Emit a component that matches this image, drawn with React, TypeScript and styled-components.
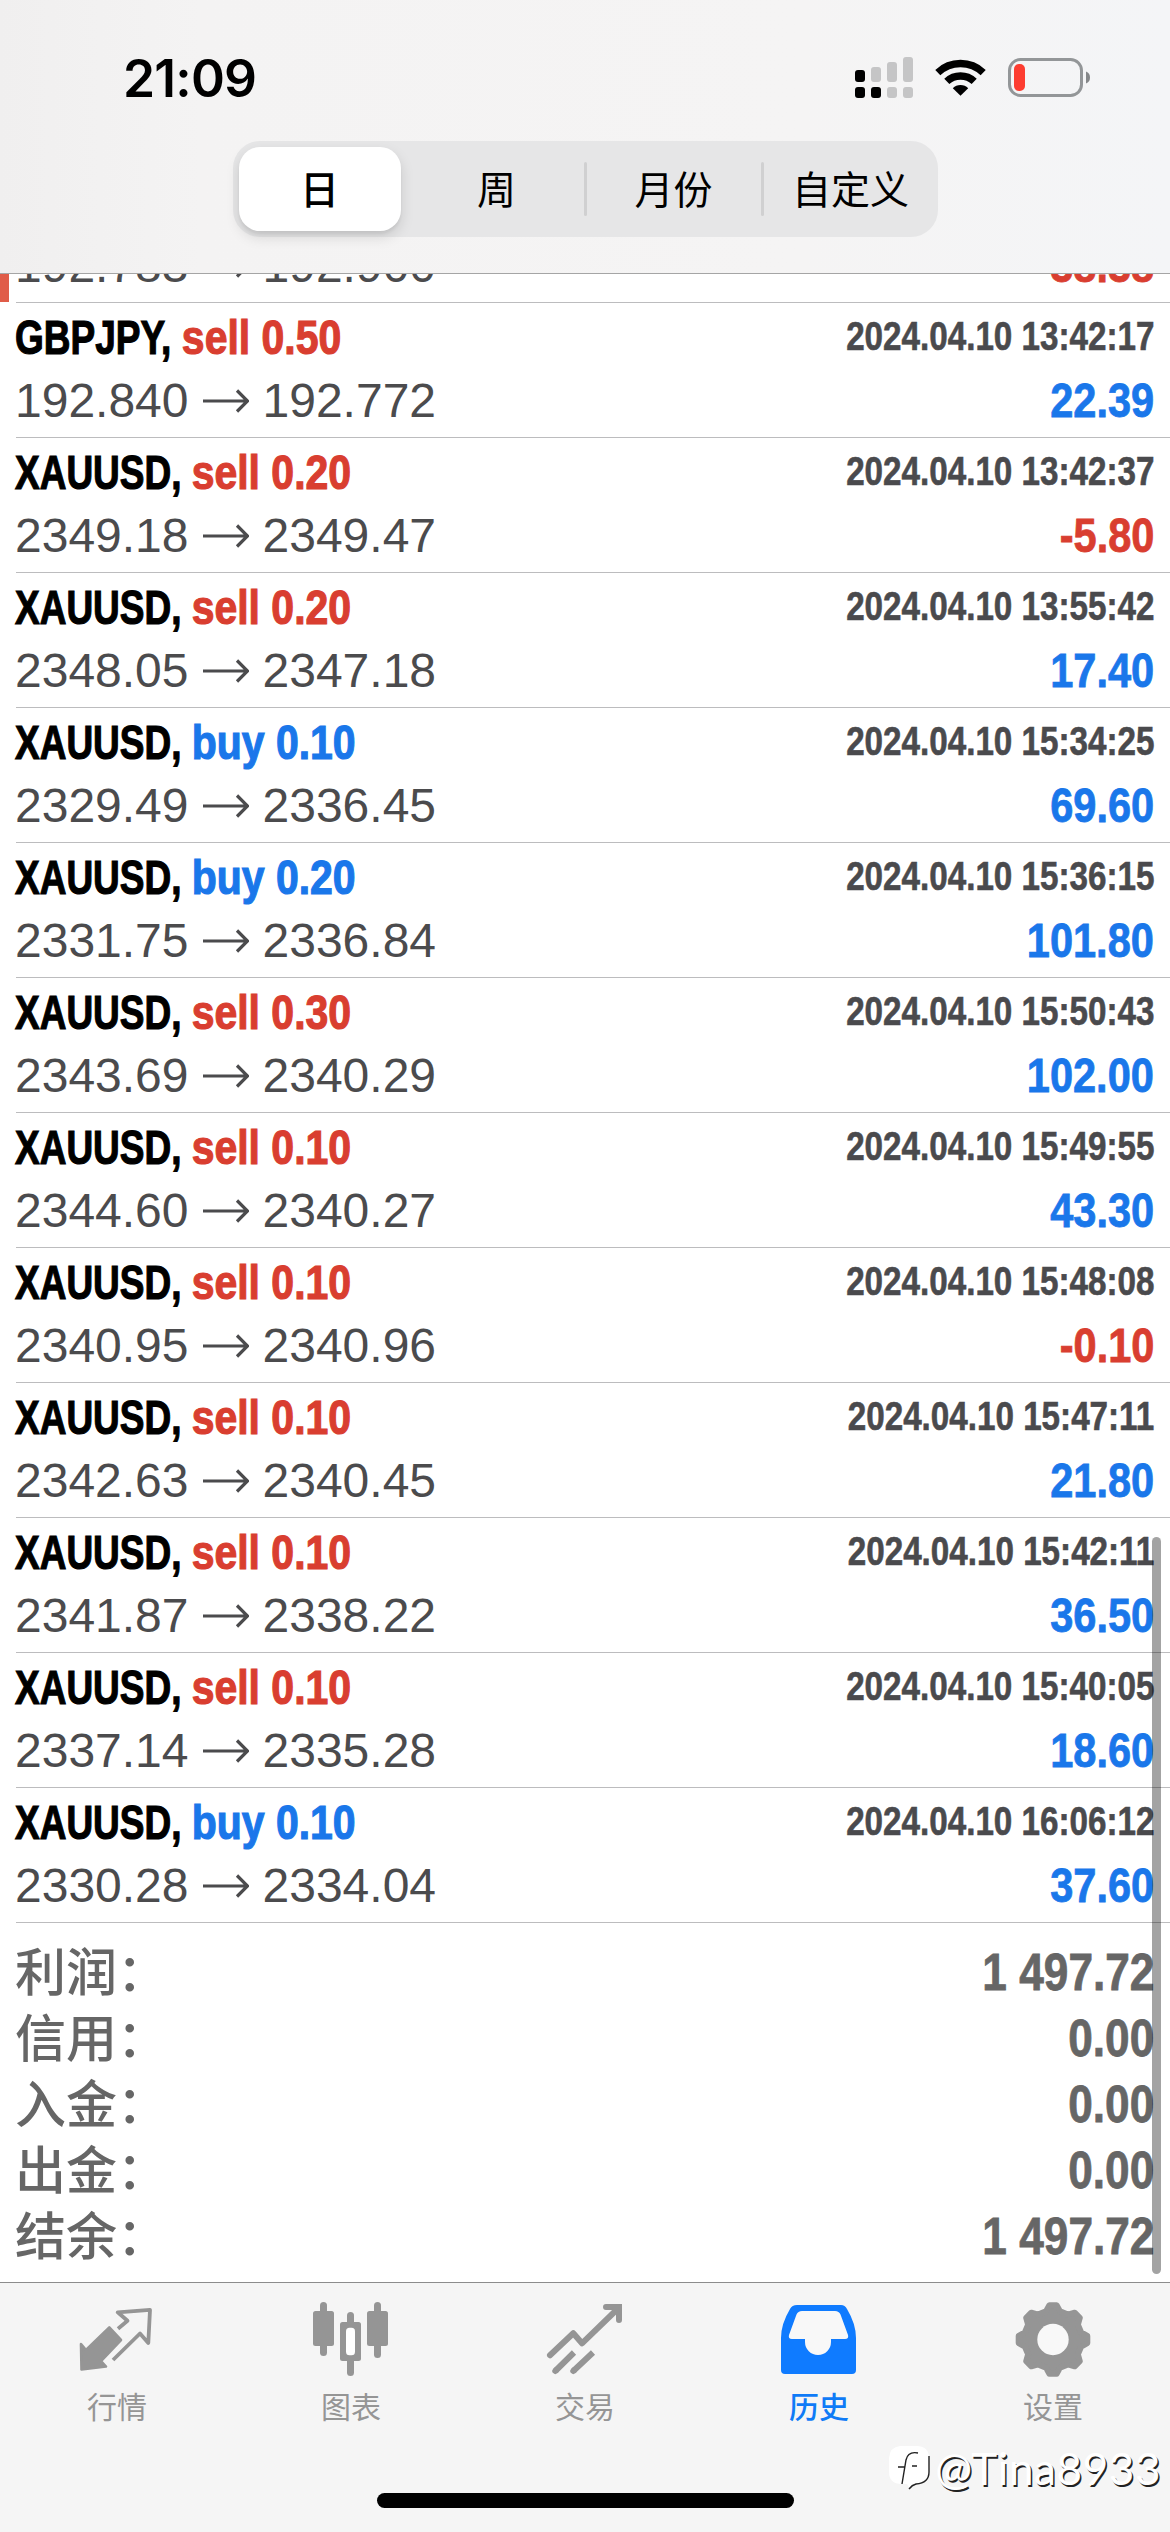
import React from "react";
import styled, { createGlobalStyle, css } from "styled-components";

const RED = "#d93e30";
const BLUE = "#1a77ea";

const GlobalStyle = createGlobalStyle`
  * { box-sizing: border-box; }
  body { margin: 0; background: #fff; }
`;

const latin = css`font-family: "Liberation Sans", Arial, sans-serif;`;
const cjk = css`font-family: "Noto Sans CJK SC", "Liberation Sans", sans-serif;`;

const Screen = styled.div`
  width: 1170px;
  height: 2532px;
  display: flex;
  flex-direction: column;
  overflow: hidden;
  background: #fff;
  ${latin}
`;

const Header = styled.header`
  height: 274px;
  flex: none;
  display: flex;
  flex-direction: column;
  align-items: center;
  border-bottom: 1px solid #a5a5a5;
  background: linear-gradient(90deg, #f0efef 0, #f4f3f3 200px, #f5f4f4 800px, #f4f5f7 1170px);
`;

const StatusBar = styled.div`
  width: 100%;
  height: 141px;
  padding: 14px 79px 0 123px;
  display: flex;
  align-items: center;
  justify-content: space-between;
`;

const Clock = styled.div`
  font: 600 51.5px/60px Inter, sans-serif;
  letter-spacing: -0.8px;
  color: #000;
`;

const StatusIcons = styled.svg`
  display: block;
  width: 236px;
  height: 44px;
`;

const Segmented = styled.div`
  width: 705px;
  height: 96px;
  padding: 6px 0 6px 6px;
  display: grid;
  grid-template-columns: 162px 9px 1fr 3px 1fr 3px 1fr;
  align-items: center;
  border-radius: 27px;
  background: #e6e6e7;
`;

const Segment = styled.div<{ $active?: boolean }>`
  height: 84px;
  display: flex;
  align-items: center;
  justify-content: center;
  border-radius: 21px;
  color: #000;
  font-size: 39px;
  line-height: 60px;
  padding-bottom: 5px;
  font-weight: ${(p) => (p.$active ? 500 : 400)};
  ${cjk}
  ${(p) => p.$active && css`
    background: #fff;
    box-shadow: 0 6px 14px rgba(0, 0, 0, 0.13), 0 3px 3px rgba(0, 0, 0, 0.05);
  `}
`;

const SegmentRule = styled.i<{ $hidden?: boolean }>`
  height: 54px;
  border-radius: 2px;
  background: ${(p) => (p.$hidden ? "transparent" : "#d0d0d1")};
`;

const ScrollArea = styled.main`
  position: relative;
  flex: 1;
  min-height: 0;
  overflow: hidden;
`;

const DealList = styled.div`
  margin-top: -106px;
`;

const Deal = styled.div<{ $flag?: boolean }>`
  height: 135px;
  display: flex;
  &::before {
    content: "";
    width: 9px;
    height: 134px;
    margin-right: 7px;
    background: ${(p) => (p.$flag ? "#e05c48" : "transparent")};
  }
`;

const DealBody = styled.div`
  flex: 1;
  padding: 1px 16px 0 0;
  border-bottom: 1px solid #bcbcbe;
`;

const Line = styled.div<{ $h: number }>`
  height: ${(p) => p.$h}px;
  line-height: ${(p) => p.$h}px;
  display: flex;
  justify-content: space-between;
  white-space: nowrap;
`;

const Title = styled.div`
  margin-left: -1px;
  font-size: 49px;
  font-weight: 700;
  color: #000;
  -webkit-text-stroke: 1.2px currentColor;
  transform: scaleX(0.755);
  transform-origin: left;
`;

const Side = styled.span<{ $color: string }>`
  display: inline-block;
  color: ${(p) => p.$color};
  transform: scaleX(1.107);
  transform-origin: left;
`;

const Stamp = styled.div`
  font-size: 40px;
  font-weight: 700;
  line-height: 65px;
  color: #4a4a4d;
  -webkit-text-stroke: 0.6px currentColor;
  transform: scaleX(0.83);
  transform-origin: right;
`;

const Prices = styled.div`
  margin-left: -1px;
  display: flex;
  align-items: center;
  font-size: 48px;
  color: #4b4b4d;
  svg { width: 46px; height: 24px; margin: 0 14px 0 14px; }
`;

const Amount = styled.div<{ $color: string }>`
  font-size: 48px;
  font-weight: 700;
  color: ${(p) => p.$color};
  -webkit-text-stroke: 0.8px currentColor;
  transform: scaleX(0.865);
  transform-origin: right;
`;

const Summary = styled.div`
  padding: 16px 16px 0 15px;
`;

const SummaryRow = styled.div`
  height: 66px;
  display: flex;
  justify-content: space-between;
  align-items: center;
  color: #666;
`;

const SummaryLabel = styled.div`
  margin-top: -6px;
  font-size: 51px;
  line-height: 66px;
  font-weight: 500;
  ${cjk}
`;

const SummaryValue = styled.div`
  font-size: 52px;
  line-height: 66px;
  font-weight: 700;
  -webkit-text-stroke: 0.8px currentColor;
  transform: scaleX(0.85);
  transform-origin: right;
`;

const ScrollThumb = styled.div`
  position: absolute;
  right: 9px;
  top: 1263px;
  bottom: 8px;
  width: 9px;
  border-radius: 5px;
  background: rgba(0, 0, 0, 0.36);
`;

const TabBar = styled.nav`
  position: relative;
  height: 250px;
  flex: none;
  border-top: 1px solid #8c8c8c;
  background: #f5f5f5;
  display: flex;
  flex-direction: column;
  align-items: center;
  justify-content: space-between;
  padding-bottom: 24px;
`;

const Tabs = styled.div`
  width: 100%;
  display: grid;
  grid-template-columns: repeat(5, 1fr);
`;

const Tab = styled.div<{ $active?: boolean }>`
  padding-top: 13px;
  display: flex;
  flex-direction: column;
  align-items: center;
  color: ${(p) => (p.$active ? "#0f7bf7" : "#959595")};
  font-size: 30px;
  line-height: 40px;
  font-weight: ${(p) => (p.$active ? 500 : 400)};
  ${cjk}
  svg { width: 84px; height: 84px; margin-bottom: 5px; }
`;

const HomeIndicator = styled.div`
  width: 417px;
  height: 15px;
  border-radius: 8px;
  background: #000;
`;

const Watermark = styled.div`
  position: absolute;
  right: 9px;
  bottom: 36px;
  display: flex;
  align-items: center;
  gap: 3px;
  font: 400 44px/56px Lato, sans-serif;
  letter-spacing: 0.6px;
  color: #fff;
  text-shadow: 1.5px 1.5px 0.5px #222;
  svg { width: 44px; height: 48px; }
`;

const gearPath = Array.from({ length: 8 })
  .flatMap((_, i) =>
    [[-14, 29], [-6, 34.5], [6, 34.5], [14, 29]].map(([da, r]) => {
      const a = ((i * 45 - 90 + da) * Math.PI) / 180;
      return `${(42 + r * Math.cos(a)).toFixed(2)} ${(43.5 + r * Math.sin(a)).toFixed(2)}`;
    })
  )
  .join(" L");

const QuotesIcon = () => (
  <svg viewBox="0 0 84 84" fill="none" stroke="currentColor">
    <path d="M6 48L11 54L34.3 31.5L46 44L26 65L31 70.5L6.5 73.5Z" fill="currentColor" strokeWidth="2.6" strokeLinejoin="round" />
    <path d="M43 32.7L52.5 24.8L42.7 16.3L75 13.8L73.3 47L65 37.5L38 64" strokeWidth="3.8" strokeLinejoin="round" />
  </svg>
);

const ChartIcon = () => (
  <svg viewBox="0 0 84 84" fill="currentColor">
    <rect x="11" y="6" width="7" height="54" rx="3.5" />
    <rect x="4" y="15" width="21" height="35" rx="2.5" />
    <rect x="65" y="6" width="7" height="56" rx="3.5" />
    <rect x="58" y="15" width="21" height="35" rx="2.5" />
    <rect x="38" y="16" width="7" height="64" rx="3.5" />
    <rect x="31" y="26" width="21" height="39" rx="2.5" />
    <rect x="37" y="31.7" width="9" height="27.6" rx="3.5" fill="#fff" />
  </svg>
);

const TradeIcon = () => (
  <svg viewBox="0 0 84 84" fill="none" stroke="currentColor" strokeWidth="6" strokeLinecap="round">
    <path d="M7 59.3L30.3 37.3L39 47.3L75 12.5" strokeLinejoin="round" />
    <path d="M63 11H76V24" />
    <path d="M12.3 75L31 56.5M30.3 75L50 56.5" strokeLinecap="butt" />
    <path d="M12.3 75L13 74.3M30.3 75L31 74.3" />
  </svg>
);

const HistoryIcon = () => (
  <svg viewBox="0 0 84 84">
    <path d="M20 9H64Q68 9 70 13Q79 28 79 42V74Q79 78 75 78H8Q4 78 4 74V42Q4 28 13 13Q15 9 20 9Z" fill="#0f7bff" />
    <path d="M25 15H58Q62 15 63.5 18.5L71 39Q72 43 68 43H54V46A13 13 0 0 1 28 46V43H15Q11 43 12 39L19.5 18.5Q21 15 25 15Z" fill="#f8f8f8" />
  </svg>
);

const SettingsIcon = () => (
  <svg viewBox="0 0 84 84">
    <path d={`M${gearPath}Z`} fill="currentColor" stroke="currentColor" strokeWidth="6" strokeLinejoin="round" />
    <circle cx="42" cy="43.5" r="15.7" fill="#f8f8f8" />
  </svg>
);

const Arrow = () => (
  <svg viewBox="0 0 46 24" fill="none" stroke="currentColor" strokeWidth="3.2">
    <path d="M0 12H44M34 1.5L44.5 12L34 22.5" />
  </svg>
);

const Status = () => (
  <StatusIcons viewBox="856 56 236 44">
    <g fill="#c5c5c6">
      <rect x="872" y="67" width="10" height="15" rx="3" />
      <rect x="888" y="62" width="10" height="20" rx="3" />
      <rect x="904" y="57" width="10" height="25" rx="3" />
      <rect x="888" y="87" width="10" height="11" rx="3" />
      <rect x="904" y="87" width="10" height="11" rx="3" />
    </g>
    <rect x="856" y="70" width="10" height="12" rx="3" />
    <rect x="856" y="87" width="10" height="11" rx="3" />
    <rect x="872" y="87" width="10" height="11" rx="3" />
    <g fill="none" stroke="#000" strokeWidth="7.4">
      <path d="M938.8 72.6A33 33 0 0 1 984.2 72.6" />
      <path d="M947.8 81.4A20 20 0 0 1 975.2 81.4" />
    </g>
    <path d="M961.5 95.8L953.8 88.2A11 11 0 0 1 969.2 88.2Z" />
    <rect x="1010.5" y="59.5" width="72" height="36" rx="11" fill="none" stroke="#939698" strokeWidth="3" />
    <rect x="1015" y="64" width="11" height="27" rx="5" fill="#fd3d31" />
    <path d="M1087 71.5Q1091 73 1091 77.5T1087 83.5Z" fill="#858789" />
  </StatusIcons>
);

type DealRow = [string, "sell" | "buy", string, string, string, string, string];

const deals: DealRow[] = [
  ["GBPJPY", "sell", "0.50", "192.783", "192.900", "2024.04.10 13:41:52", "-38.38"],
  ["GBPJPY", "sell", "0.50", "192.840", "192.772", "2024.04.10 13:42:17", "22.39"],
  ["XAUUSD", "sell", "0.20", "2349.18", "2349.47", "2024.04.10 13:42:37", "-5.80"],
  ["XAUUSD", "sell", "0.20", "2348.05", "2347.18", "2024.04.10 13:55:42", "17.40"],
  ["XAUUSD", "buy", "0.10", "2329.49", "2336.45", "2024.04.10 15:34:25", "69.60"],
  ["XAUUSD", "buy", "0.20", "2331.75", "2336.84", "2024.04.10 15:36:15", "101.80"],
  ["XAUUSD", "sell", "0.30", "2343.69", "2340.29", "2024.04.10 15:50:43", "102.00"],
  ["XAUUSD", "sell", "0.10", "2344.60", "2340.27", "2024.04.10 15:49:55", "43.30"],
  ["XAUUSD", "sell", "0.10", "2340.95", "2340.96", "2024.04.10 15:48:08", "-0.10"],
  ["XAUUSD", "sell", "0.10", "2342.63", "2340.45", "2024.04.10 15:47:11", "21.80"],
  ["XAUUSD", "sell", "0.10", "2341.87", "2338.22", "2024.04.10 15:42:11", "36.50"],
  ["XAUUSD", "sell", "0.10", "2337.14", "2335.28", "2024.04.10 15:40:05", "18.60"],
  ["XAUUSD", "buy", "0.10", "2330.28", "2334.04", "2024.04.10 16:06:12", "37.60"],
];

const totals = [
  ["利润：", "1 497.72"],
  ["信用：", "0.00"],
  ["入金：", "0.00"],
  ["出金：", "0.00"],
  ["结余：", "1 497.72"],
];

export default function App() {
  return (
    <Screen>
      <GlobalStyle />
      <Header>
        <StatusBar>
          <Clock>21:09</Clock>
          <Status />
        </StatusBar>
        <Segmented>
          <Segment $active>日</Segment>
          <SegmentRule $hidden />
          <Segment>周</Segment>
          <SegmentRule />
          <Segment>月份</Segment>
          <SegmentRule />
          <Segment>自定义</Segment>
        </Segmented>
      </Header>

      <ScrollArea>
        <DealList>
          {deals.map(([symbol, side, volume, open, close, time, profit], i) => (
            <Deal key={time} $flag={i === 0}>
              <DealBody>
                <Line $h={66}>
                  <Title>
                    {symbol},{" "}
                    <Side $color={side === "sell" ? RED : BLUE}>{side} {volume}</Side>
                  </Title>
                  <Stamp>{time}</Stamp>
                </Line>
                <Line $h={62}>
                  <Prices>
                    <span>{open}</span>
                    <Arrow />
                    <span>{close}</span>
                  </Prices>
                  <Amount $color={profit.startsWith("-") ? RED : BLUE}>{profit}</Amount>
                </Line>
              </DealBody>
            </Deal>
          ))}
        </DealList>
        <Summary>
          {totals.map(([label, value]) => (
            <SummaryRow key={label}>
              <SummaryLabel>{label}</SummaryLabel>
              <SummaryValue>{value}</SummaryValue>
            </SummaryRow>
          ))}
        </Summary>
        <ScrollThumb />
      </ScrollArea>

      <TabBar>
        <Tabs>
          <Tab><QuotesIcon />行情</Tab>
          <Tab><ChartIcon />图表</Tab>
          <Tab><TradeIcon />交易</Tab>
          <Tab $active><HistoryIcon />历史</Tab>
          <Tab><SettingsIcon />设置</Tab>
        </Tabs>
        <HomeIndicator />
        <Watermark>
          <svg viewBox="0 0 44 48" fill="none">
            <path d="M12 2H30Q41 3 41 14V28Q41 39 28 40Q24 41 22 45L19 40H12Q1 39 1 28V14Q2 3 12 2Z" fill="#fff" />
            <path d="M41 12V28Q41 39 28 40Q24 41 21 45M30 9Q20 7 18 16L14 40M10 23H17M24 22H29" stroke="#222" strokeWidth="1.4" />
          </svg>
          @Tina8933
        </Watermark>
      </TabBar>
    </Screen>
  );
}
